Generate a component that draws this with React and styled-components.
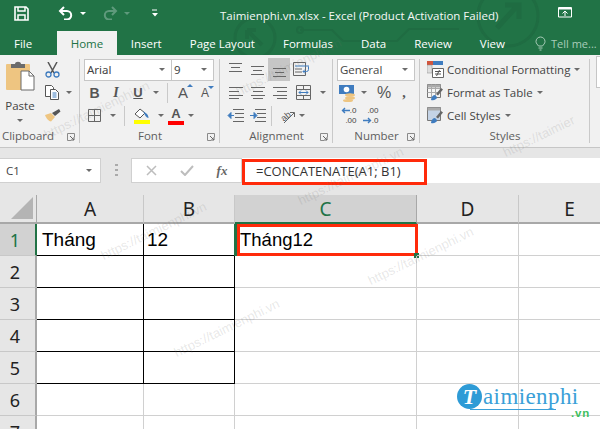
import styled, { createGlobalStyle } from "styled-components";

const UI = `"Open Sans", "Noto Sans", sans-serif`;
const GREEN = "#217346";

const Global = createGlobalStyle`
  html, body { margin: 0; padding: 0; background: #fff; }
  body { width: 600px; height: 429px; overflow: hidden; font-family: ${UI}; }
`;

const Page = styled.div`
  position: relative;
  width: 600px;
  height: 429px;
  overflow: hidden;
  background: #fff;
`;

/* title bar + tabs */
const Head = styled.header`
  position: relative;
  height: 55px;
  background: ${GREEN};
  color: #fff;
`;
const HeadArt = styled.svg`
  position: absolute;
  left: 0;
  top: 0;
`;
const TitleBar = styled.div`
  position: relative;
  display: flex;
  align-items: center;
  height: 31px;
  font-size: 12px;
`;
const Qat = styled.span`
  display: flex;
  align-items: center;
  justify-content: center;
  width: ${(p) => p.$w}px;
  margin-left: ${(p) => p.$ml || 0}px;
  margin-top: -5px;
`;
const Title = styled.div`
  position: absolute;
  left: 220px;
  top: 7px;
  white-space: nowrap;
  font-size: 11.5px;
  line-height: 18px;
  color: #f4f8f6;
`;
const DisplayBtn = styled.span`
  position: absolute;
  left: 558px;
  top: 7px;
  display: flex;
`;
const Tabs = styled.nav`
  position: relative;
  display: flex;
  height: 24px;
`;
const Tab = styled.div`
  display: flex;
  align-items: center;
  padding: 0 ${(p) => p.$pad || 14}px;
  margin-right: ${(p) => p.$mr || 0}px;
  font-size: 11.5px;
  white-space: nowrap;
  background: ${(p) => (p.$active ? "#f1f1f1" : "transparent")};
  color: ${(p) => (p.$active ? GREEN : "#fff")};
`;
const TellMe = styled.div`
  position: absolute;
  left: 535px;
  top: 0;
  height: 24px;
  display: flex;
  align-items: center;
  gap: 5px;
  font-size: 11px;
  color: #a9cdb9;
  white-space: nowrap;
`;

/* ribbon */
const Ribbon = styled.section`
  display: flex;
  height: 92px;
  background: #f1f1f1;
  border-bottom: 1px solid #c6c6c6;
  box-sizing: content-box;
  overflow: hidden;
`;
const Group = styled.div`
  position: relative;
  flex: 0 0 ${(p) => p.$w}px;
  display: flex;
  flex-direction: column;
  height: 92px;
  padding-top: 3px;
  box-sizing: border-box;
  &::after {
    content: "";
    position: absolute;
    right: 0;
    top: 4px;
    bottom: 4px;
    width: 1px;
    background: #c9c9c9;
  }
`;
const GroupBody = styled.div`
  height: 69px;
  display: ${(p) => (p.$split ? "flex" : "block")};
  padding-left: ${(p) => p.$pl || 0}px;
`;
const GroupLabel = styled.div`
  height: 17px;
  line-height: 17px;
  margin-top: 0;
  text-align: center;
  font-size: 11.5px;
  color: #5e5e5e;
  padding-right: ${(p) => p.$pr || 0}px;
`;
const Launcher = styled.svg`
  position: absolute;
  right: 5px;
  bottom: 6px;
`;
const Row = styled.div`
  display: flex;
  align-items: center;
  height: 23px;
`;
const PasteIconRow = styled(Row)`
  height: 33px;
  align-items: flex-end;
`;
const Slot = styled.span`
  flex: 0 0 ${(p) => p.$w || 22}px;
  height: ${(p) => (p.$active ? 23 : 20)}px;
  margin-left: ${(p) => p.$ml || 0}px;
  display: flex;
  align-items: center;
  justify-content: center;
  background: ${(p) => (p.$active ? "#c6c6c6" : "transparent")};
`;
const Rule = styled.span`
  flex: 0 0 1px;
  height: 20px;
  background: #c9c9c9;
  margin: 0 ${(p) => p.$m || 4}px;
`;
const Caret = styled.span`
  width: 0;
  height: 0;
  border-left: 3px solid transparent;
  border-right: 3px solid transparent;
  border-top: 3px solid ${(p) => p.$color || "#6b6b6b"};
  margin-left: ${(p) => p.$ml || 0}px;
  flex: none;
`;
const Combo = styled.div`
  width: ${(p) => p.$w}px;
  height: 22px;
  margin-left: ${(p) => p.$ml || 0}px;
  box-sizing: border-box;
  background: #fff;
  border: 1px solid #c6c6c6;
  display: flex;
  align-items: center;
  justify-content: space-between;
  padding: 0 6px 0 2px;
  font-family: ${(p) => (p.$plain ? UI : `"Noto Sans", sans-serif`)};
  font-size: 11.5px;
  color: #444;
`;
const PasteCol = styled.div`
  flex: 0 0 40px;
  display: flex;
  flex-direction: column;
  align-items: center;
`;
const PasteLabel = styled.div`
  margin-top: 7px;
  font-size: 11.5px;
  line-height: 16px;
  color: #444;
`;
const PasteCaret = styled(Caret)`
  margin-top: 5px;
`;
const ToolCol = styled.div`
  flex: none;
`;
const Glyph = styled.span`
  font-family: ${(p) => (p.$serif ? `"Liberation Serif", serif` : `"Liberation Sans", sans-serif`)};
  font-size: ${(p) => p.$size || 13}px;
  font-weight: ${(p) => (p.$bold ? 700 : 400)};
  font-style: ${(p) => (p.$italic ? "italic" : "normal")};
  text-decoration: ${(p) => (p.$under ? "underline" : "none")};
  color: #555;
  line-height: 1;
`;
const GrowA = styled.span`
  position: relative;
  display: flex;
  font-family: "Liberation Sans", sans-serif;
  font-size: ${(p) => p.$size}px;
  color: #555;
  line-height: 1;
  &::after {
    content: "";
    position: absolute;
    right: -5px;
    top: -1px;
    border-left: 3px solid transparent;
    border-right: 3px solid transparent;
    ${(p) => (p.$up ? "border-bottom: 3px solid #3f7cbf;" : "border-top: 3px solid #3f7cbf;")}
  }
`;
const ColorA = styled.span`
  display: flex;
  flex-direction: column;
  align-items: center;
  width: 16px;
  font-family: "Liberation Sans", sans-serif;
  font-size: 13px;
  font-weight: 700;
  line-height: 13px;
  color: #555;
  &::after {
    content: "";
    width: 16px;
    height: 4px;
    margin-top: 1px;
    background: #f00;
  }
`;
const Decimals = styled.span`
  display: flex;
  flex-direction: column;
  align-items: flex-end;
  width: 17px;
  font-family: "Liberation Sans", sans-serif;
  font-size: 8px;
  line-height: 9.5px;
  color: #444;
`;
const DecimalLine = styled.span`
  display: flex;
  align-items: center;
`;
const StyleRow = styled(Row)`
  gap: 3px;
  padding-left: 7px;
  font-size: 11.5px;
  color: #444;
  white-space: nowrap;
`;
const CutOffBox = styled.div`
  width: 10px;
  height: 30px;
  margin: 1px 0 0 6px;
  background: #fff;
  border: 1px solid #c6c6c6;
  border-right: none;
`;

/* formula bar */
const FormulaBar = styled.section`
  display: flex;
  align-items: flex-start;
  height: 47px;
  padding-top: 10px;
  box-sizing: border-box;
  background: #e6e6e6;
`;
const NameBox = styled.div`
  width: 101px;
  height: 25px;
  box-sizing: border-box;
  display: flex;
  align-items: center;
  justify-content: space-between;
  padding: 0 8px 0 6px;
  background: #fff;
  border: 1px solid #d0d0d0;
  border-left: none;
  font-size: 11.5px;
  color: #444;
`;
const Grip = styled.div`
  flex: 0 0 30px;
  height: 25px;
  display: flex;
  align-items: center;
  justify-content: center;
`;
const FxButtons = styled.div`
  width: 110px;
  height: 25px;
  box-sizing: border-box;
  display: flex;
  align-items: center;
  background: #fff;
  border: 1px solid #d0d0d0;
  border-right: none;
`;
const FxSlot = styled.span`
  flex: 0 0 ${(p) => p.$w}px;
  display: flex;
  justify-content: center;
  font-family: "Liberation Serif", serif;
  font-style: italic;
  font-weight: 700;
  font-size: 13px;
  color: #666;
`;
const FormulaInput = styled.div`
  position: relative;
  flex: 1;
  height: 25px;
  background: #fff;
  border-left: 1px solid #d0d0d0;
  display: flex;
  align-items: center;
  padding-left: 14px;
  font-size: 13px;
  color: #333;
  white-space: nowrap;
`;
const Callout = styled.span`
  position: absolute;
  left: 0;
  top: 1px;
  width: 185px;
  height: 26px;
  box-sizing: border-box;
  border: 3px solid #ff2a0a;
`;

/* sheet */
const Sheet = styled.section`
  display: grid;
  grid-template-columns: 37px 107px 91px 182px 102px 102px;
  grid-template-rows: 29px;
  grid-auto-rows: 32px;
`;
const Corner = styled.div`
  background: #e6e6e6;
  border-right: 1px solid #a8a8a8;
  border-bottom: 2px solid #a8a8a8;
  display: flex;
  align-items: flex-end;
  justify-content: flex-end;
  padding: 0 3px 3px 0;
  box-sizing: border-box;
`;
const ColHead = styled.div`
  box-sizing: border-box;
  background: ${(p) => (p.$on ? "#d2d2d2" : "#e6e6e6")};
  color: ${(p) => (p.$on ? GREEN : "#222")};
  border-right: 1px solid ${(p) => (p.$on ? "#a8a8a8" : "#c8c8c8")};
  border-bottom: 2px solid ${(p) => (p.$on ? GREEN : "#a8a8a8")};
  display: flex;
  align-items: center;
  justify-content: center;
  font-family: "Noto Sans", sans-serif;
  font-size: 19px;
`;
const RowHead = styled.div`
  box-sizing: border-box;
  background: ${(p) => (p.$on ? "#d2d2d2" : "#e6e6e6")};
  color: ${(p) => (p.$on ? GREEN : "#222")};
  border-right: 2px solid ${(p) => (p.$on ? GREEN : "#a8a8a8")};
  border-bottom: 1px solid #c8c8c8;
  display: flex;
  align-items: center;
  justify-content: center;
  padding-right: 5px;
  font-family: "Noto Sans", sans-serif;
  font-size: 18px;
`;
const Cell = styled.div`
  position: relative;
  box-sizing: border-box;
  border-right: 1px solid ${(p) => (p.$black ? "#000" : "#d0d0d0")};
  border-bottom: 1px solid ${(p) => (p.$black ? "#000" : "#d0d0d0")};
  display: flex;
  align-items: center;
  padding-left: ${(p) => p.$pl || 3}px;
  font-family: "Liberation Sans", sans-serif;
  font-size: ${(p) => p.$size || 19}px;
  color: #000;
`;
const Selection = styled.span`
  position: absolute;
  left: -1px;
  top: 0;
  bottom: -1px;
  width: 3px;
  background: ${GREEN};
`;
const RedBox = styled.span`
  position: absolute;
  left: 2px;
  right: -2px;
  top: 0;
  bottom: -1px;
  border: 3px solid #ff2a0a;
`;
const Handle = styled.span`
  position: absolute;
  right: -3px;
  bottom: -3px;
  width: 5px;
  height: 5px;
  background: ${GREEN};
`;

/* overlays */
const Watermark = styled.span`
  position: absolute;
  left: ${(p) => p.$x}px;
  top: ${(p) => p.$y}px;
  font-family: "Liberation Sans", sans-serif;
  font-size: 13px;
  color: rgba(110, 110, 110, 0.17);
  transform: rotate(-26deg);
  transform-origin: left bottom;
  white-space: nowrap;
  pointer-events: none;
`;
const Logo = styled.div`
  position: absolute;
  left: 457px;
  top: 384px;
  width: 135px;
  height: 36px;
  display: flex;
  align-items: flex-start;
`;
const LogoBadge = styled.span`
  flex: 0 0 25px;
  height: 25px;
  border-radius: 50%;
  background: #2e9bd6;
  color: #fff;
  display: flex;
  align-items: center;
  justify-content: center;
  font-family: "Liberation Serif", serif;
  font-style: italic;
  font-weight: 700;
  font-size: 22px;
  line-height: 1;
`;
const LogoName = styled.span`
  position: relative;
  margin-left: 1px;
  margin-top: 1px;
  font-family: "Liberation Serif", serif;
  font-size: 23px;
  line-height: 24px;
  letter-spacing: 0.4px;
  color: #3a9fd8;
  &::after {
    content: "";
    position: absolute;
    left: -13px;
    right: 23px;
    bottom: -1px;
    height: 1px;
    background: #3a9fd8;
  }
`;
const LogoTld = styled.span`
  position: absolute;
  right: 2px;
  top: 24px;
  font-family: "Liberation Sans", sans-serif;
  font-weight: 700;
  font-size: 11.5px;
  line-height: 11px;
  letter-spacing: 0.8px;
  color: #3fbf5f;
`;

/* drawings */
const Svg = ({ w, h, children }) => (
  <svg width={w} height={h} viewBox={`0 0 ${w} ${h}`} fill="none" style={{ display: "block" }}>
    {children}
  </svg>
);

const SaveIcon = () => (
  <Svg w={15} h={15}>
    <path d="M1 1h11l2 2v11H1z" stroke="#fff" strokeWidth="1.6" />
    <path d="M4 1v4h7V1M4 14V9h7v5" stroke="#fff" strokeWidth="1.5" />
  </Svg>
);
const UndoIcon = ({ color }) => (
  <Svg w={15} h={14}>
    <path d="M2 5h7a4.2 4.2 0 0 1 0 8.4H6" stroke={color} strokeWidth="2" />
    <path d="M6 1 2 5l4 4" stroke={color} strokeWidth="2" />
  </Svg>
);
const RedoIcon = ({ color }) => (
  <Svg w={15} h={14}>
    <path d="M13 5H6a4.2 4.2 0 0 0 0 8.4h3" stroke={color} strokeWidth="2" />
    <path d="M9 1l4 4-4 4" stroke={color} strokeWidth="2" />
  </Svg>
);
const CustomizeIcon = () => (
  <Svg w={8} h={9}>
    <path d="M1 1h5" stroke="#fff" />
    <path d="M1 4h6L4 7.5z" fill="#fff" />
  </Svg>
);
const DisplayIcon = () => (
  <Svg w={14} h={11}>
    <path d="M.5.5h13v9.5H.5z" stroke="#fff" />
    <path d="M1 1h12v1.5H1z" fill="#fff" />
    <path d="M7 9V4.5M4.5 6.5 7 4l2.5 2.5" stroke="#fff" />
  </Svg>
);
const BulbIcon = () => (
  <Svg w={11} h={15}>
    <path d="M3.5 10C2.5 8.5 1 7.5 1 5.5a4.5 4.5 0 0 1 9 0c0 2-1.5 3-2.5 4.5z" stroke="#a9cdb9" />
    <path d="M3.5 12h4M4.5 14h2" stroke="#a9cdb9" />
  </Svg>
);
const PasteIcon = () => (
  <Svg w={29} h={30}>
    <rect x="0" y="3" width="24" height="26" rx="1" fill="#eec581" />
    <path d="M5 3h4c0-3 6-3 6 0h4v4H5z" fill="#6b6b6b" />
    <path d="M15 10h8l5 5v14H15z" fill="#fff" stroke="#6b6b6b" />
    <path d="M23 10v5h5" stroke="#6b6b6b" />
  </Svg>
);
const CutIcon = () => (
  <Svg w={15} h={16}>
    <path d="M3 0l6 11M12 0 6 11" stroke="#555" strokeWidth="1.5" />
    <circle cx="3.5" cy="12.5" r="2.5" stroke="#3f7cbf" strokeWidth="1.3" />
    <circle cx="11.5" cy="12.5" r="2.5" stroke="#3f7cbf" strokeWidth="1.3" />
  </Svg>
);
const CopyIcon = () => (
  <Svg w={15} h={15}>
    <path d="M.5.5h6l2 2v9h-8z" fill="#fff" stroke="#555" />
    <path d="M5.5 4.5h5l3 3v7h-8z" fill="#fff" stroke="#555" />
    <path d="M7.5 8h4M7.5 10h4M7.5 12h4" stroke="#3f7cbf" />
  </Svg>
);
const PainterIcon = () => (
  <Svg w={17} h={13}>
    <path d="M1 6l6-2 4 4-4 4.5C5 12.5 2 9 1 6z" fill="#eec581" />
    <path d="M8 4l7-4 1.5 2.5L11 7z" fill="#555" />
  </Svg>
);
const BorderIcon = () => (
  <Svg w={13} h={13}>
    <path d="M.5.5h12v12H.5zM6.5.5v12M.5 6.5h12" stroke="#666" />
  </Svg>
);
const FillIcon = () => (
  <Svg w={17} h={16}>
    <path d="M6 1 1 6l5 4 5-5z" fill="#fff" stroke="#555" />
    <path d="M9 3l4 3c1 1 1.5 3 1.5 4-1 0-2-1-3-2z" fill="#3f7cbf" />
    <path d="M0 12h16v4H0z" fill="#ff0" />
  </Svg>
);
const Lines = ({ rows, w = 15, h = 15, color = "#666" }) => (
  <Svg w={w} h={h}>
    {rows.map(([x1, y, x2], i) => (
      <path key={i} d={`M${x1} ${y + 0.5}H${x2}`} stroke={color} />
    ))}
  </Svg>
);
const WrapIcon = () => (
  <Svg w={17} h={15}>
    <path d="M.5.5h12v13H.5z" stroke="#666" />
    <path d="M2 4h14" stroke="#3f7cbf" />
    <path d="M2 7h7M2 10h7" stroke="#666" />
    <path d="M15.5 4.5v3q0 2-2 2H10M12 7.5l-2 2 2 2" stroke="#3f7cbf" />
  </Svg>
);
const MergeIcon = () => (
  <Svg w={15} h={15}>
    <path d="M.5.5h14v14H.5zM.5 4.5h14M.5 10.5h14M7.5.5v4M7.5 10.5v4" stroke="#666" />
    <path d="M3 7.5h9M5 5.5l-2 2 2 2M10 5.5l2 2-2 2" stroke="#3f7cbf" />
  </Svg>
);
const IndentIcon = ({ flip }) => (
  <Svg w={17} h={13}>
    <path d="M6 .5h11M8 4.5h9M8 8.5h9M6 12.5h11" stroke="#666" />
    {flip ? (
      <path d="M1 6.5h4V3.5l3 3-3 3v-3H1z" fill="#3f7cbf" stroke="#3f7cbf" />
    ) : (
      <path d="M7 6.5H4V3.5l-3 3 3 3v-3z" fill="#3f7cbf" stroke="#3f7cbf" />
    )}
  </Svg>
);
const OrientIcon = () => (
  <Svg w={20} h={18}>
    <text x="4" y="13" fontFamily="Liberation Sans" fontSize="9" fill="#555" transform="rotate(-40 8 10)">ab</text>
    <path d="M7 16 17 6M13 5.5h4.5V10" stroke="#666" />
  </Svg>
);
const MoneyIcon = () => (
  <Svg w={18} h={18}>
    <path d="M0 1h15v9H0z" fill="#3f7cbf" />
    <circle cx="7.5" cy="5.5" r="2.8" fill="#fff" />
    <ellipse cx="11" cy="11" rx="5" ry="1.8" fill="#eec581" />
    <ellipse cx="11" cy="14" rx="5" ry="1.8" fill="#eec581" />
    <ellipse cx="9" cy="16.5" rx="5" ry="1.5" fill="#eec581" />
  </Svg>
);
const ArrowLeft = () => (
  <Svg w={9} h={7}>
    <path d="M9 3.5H2M4 1 1.5 3.5 4 6" stroke="#3f7cbf" strokeWidth="1.4" />
  </Svg>
);
const ArrowRight = () => (
  <Svg w={9} h={7}>
    <path d="M0 3.5h7M5 1l2.5 2.5L5 6" stroke="#3f7cbf" strokeWidth="1.4" />
  </Svg>
);
const CondIcon = () => (
  <Svg w={17} h={17}>
    <path d="M0 0h6v4H0z" fill="#d2553d" />
    <path d="M6 0h10v4H6z" fill="#3f7cbf" />
    <path d="M0 4h5v8H0z" fill="#ddd" stroke="#888" strokeWidth=".5" />
    <path d="M5.5 7.5h11v9h-11z" fill="#fff" stroke="#666" />
    <path d="M8 10.5h6M8 13h6M12.5 9l-3 6" stroke="#555" />
  </Svg>
);
const TableIcon = ({ shaded }) => (
  <Svg w={17} h={17}>
    <path d="M.5.5h13v13H.5z" fill={shaded ? "#c4d3e6" : "#f6f6f6"} stroke="#777" />
    {!shaded && <path d="M.5 4.5h13M.5 8.5h13M4.5.5v13M8.5.5v13" stroke="#aaa" />}
    <path d="M.5.5h13v3H.5z" fill="#aaa" />
    <path d="M9 10l5-6 2 1.5-5 6z" fill="#666" />
    <path d="M4 16c0-3 2-5 4-5l2 2c0 2-3 4-6 3z" fill="#3f7cbf" />
  </Svg>
);
const LauncherIcon = () => (
  <Launcher width="8" height="8" viewBox="0 0 8 8" fill="none">
    <path d="M.5 4V.5H7.5V4M.5 4v3.5H4" stroke="#8a8a8a" />
    <path d="M3 3l4 4M7 4v3H4" stroke="#666" />
  </Launcher>
);

const Art = () => (
  <HeadArt width="600" height="55" viewBox="0 0 600 55" fill="none" stroke="#1f6c42" strokeWidth="3">
    <circle cx="255" cy="38" r="20" />
    <path d="M247 30 262 45M247 30h9M247 30v9" strokeWidth="4" />
    <circle cx="508" cy="16" r="30" />
    <path d="M497 28 518 5M505 5h14v14" strokeWidth="5" />
    <path d="M300 30h32l11 11h54l12-12h50" strokeWidth="2" />
    <circle cx="300" cy="30" r="3" strokeWidth="2" />
  </HeadArt>
);

const colHeads = ["A", "B", "C", "D", "E"];

function RibbonBar() {
  return (
    <Ribbon>
      <Group $w={80}>
        <GroupBody $split>
          <PasteCol>
            <PasteIconRow>
              <PasteIcon />
            </PasteIconRow>
            <PasteLabel>Paste</PasteLabel>
            <PasteCaret />
          </PasteCol>
          <ToolCol>
            <Row><Slot $w={24}><CutIcon /></Slot></Row>
            <Row><Slot $w={24}><CopyIcon /></Slot><Caret $ml={2} /></Row>
            <Row><Slot $w={24}><PainterIcon /></Slot></Row>
          </ToolCol>
        </GroupBody>
        <GroupLabel $pr={24}>Clipboard</GroupLabel>
        <LauncherIcon />
      </Group>

      <Group $w={140}>
        <GroupBody $pl={4}>
          <Row>
            <Combo $w={88}>Arial<Caret /></Combo>
            <Combo $w={43} $ml={-1}>9<Caret /></Combo>
          </Row>
          <Row>
            <Slot $w={21}><Glyph $bold $size={14}>B</Glyph></Slot>
            <Slot><Glyph $italic $bold $serif $size={14}>I</Glyph></Slot>
            <Slot><Glyph $under $bold $size={13}>U</Glyph></Slot>
            <Slot $w={14}><Caret /></Slot>
            <Rule />
            <Slot $w={22}><GrowA $size={15} $up>A</GrowA></Slot>
            <Slot $w={22}><GrowA $size={12}>A</GrowA></Slot>
          </Row>
          <Row>
            <Slot $w={21}><BorderIcon /></Slot>
            <Slot $w={14} $ml={1}><Caret /></Slot>
            <Rule />
            <Slot $w={27}><FillIcon /></Slot>
            <Slot $w={9}><Caret /></Slot>
            <Slot $w={22}><ColorA>A</ColorA></Slot>
            <Slot $w={8}><Caret /></Slot>
          </Row>
        </GroupBody>
        <GroupLabel>Font</GroupLabel>
        <LauncherIcon />
      </Group>

      <Group $w={113}>
        <GroupBody $pl={4}>
          <Row>
            <Slot><Lines rows={[[1, 1, 14], [3, 5, 12], [1, 9, 14]]} /></Slot>
            <Slot><Lines rows={[[1, 4, 14], [3, 8, 12], [1, 12, 14]]} /></Slot>
            <Slot $active><Lines rows={[[1, 6, 14], [3, 10, 12], [1, 14, 14]]} /></Slot>
            <Slot><WrapIcon /></Slot>
          </Row>
          <Row>
            <Slot><Lines rows={[[1, 2, 15], [1, 6, 11], [1, 10, 15], [1, 13, 11]]} /></Slot>
            <Slot><Lines rows={[[1, 2, 15], [3, 6, 13], [1, 10, 15], [3, 13, 13]]} /></Slot>
            <Slot><Lines rows={[[1, 2, 15], [5, 6, 15], [1, 10, 15], [5, 13, 15]]} /></Slot>
            <Slot $w={27}><MergeIcon /></Slot>
            <Slot $w={12}><Caret /></Slot>
          </Row>
          <Row>
            <Slot><IndentIcon /></Slot>
            <Slot><IndentIcon flip /></Slot>
            <Rule $m={3} />
            <Slot $w={24}><OrientIcon /></Slot>
            <Slot $w={6}><Caret /></Slot>
          </Row>
        </GroupBody>
        <GroupLabel>Alignment</GroupLabel>
        <LauncherIcon />
      </Group>

      <Group $w={87}>
        <GroupBody $pl={4}>
          <Row><Combo $w={78} $plain>General<Caret /></Combo></Row>
          <Row>
            <Slot $w={22}><MoneyIcon /></Slot>
            <Slot $w={10}><Caret /></Slot>
            <Slot $w={30}><Glyph $size={16}>%</Glyph></Slot>
            <Slot $w={10}><Glyph $bold $serif $size={14}>,</Glyph></Slot>
          </Row>
          <Row>
            <Slot $w={22}>
              <Decimals>
                <DecimalLine><ArrowLeft />.0</DecimalLine>
                <DecimalLine>.00</DecimalLine>
              </Decimals>
            </Slot>
            <Slot $w={22}>
              <Decimals>
                <DecimalLine>.00</DecimalLine>
                <DecimalLine><ArrowRight />.0</DecimalLine>
              </Decimals>
            </Slot>
          </Row>
        </GroupBody>
        <GroupLabel>Number</GroupLabel>
        <LauncherIcon />
      </Group>

      <Group $w={170}>
        <GroupBody>
          <StyleRow><CondIcon />Conditional Formatting<Caret $ml={1} /></StyleRow>
          <StyleRow><TableIcon />Format as Table<Caret $ml={1} /></StyleRow>
          <StyleRow><TableIcon shaded />Cell Styles<Caret $ml={1} /></StyleRow>
        </GroupBody>
        <GroupLabel>Styles</GroupLabel>
      </Group>
      <CutOffBox />
    </Ribbon>
  );
}

export default function App() {
  const rows = [1, 2, 3, 4, 5, 6, 7];
  return (
    <Page>
      <Global />
      <Head>
        <Art />
        <TitleBar>
          <Qat $w={15} $ml={14}><SaveIcon /></Qat>
          <Qat $w={15} $ml={29}><UndoIcon color="#fff" /></Qat>
          <Qat $w={10} $ml={5}><Caret $color="#fff" /></Qat>
          <Qat $w={15} $ml={15}><RedoIcon color="#5f9a7c" /></Qat>
          <Qat $w={10} $ml={4}><Caret $color="#5f9a7c" /></Qat>
          <Qat $w={8} $ml={19}><CustomizeIcon /></Qat>
          <Title>Taimienphi.vn.xlsx - Excel (Product Activation Failed)</Title>
          <DisplayBtn><DisplayIcon /></DisplayBtn>
        </TitleBar>
        <Tabs>
          <Tab $pad={14} $mr={11}>File</Tab>
          <Tab $active $pad={13.5}>Home</Tab>
          <Tab>Insert</Tab>
          <Tab>Page Layout</Tab>
          <Tab>Formulas</Tab>
          <Tab>Data</Tab>
          <Tab>Review</Tab>
          <Tab>View</Tab>
          <TellMe><BulbIcon />Tell me...</TellMe>
        </Tabs>
      </Head>

      <RibbonBar />

      <FormulaBar>
        <NameBox>C1<Caret /></NameBox>
        <Grip>
          <Svg w={3} h={13}>
            <path d="M0 1h3M0 6h3M0 11h3" stroke="#aaa" strokeWidth="2" />
          </Svg>
        </Grip>
        <FxButtons>
          <FxSlot $w={38}>
            <Svg w={11} h={11}><path d="M1 1l9 9M10 1l-9 9" stroke="#bdbdbd" strokeWidth="1.5" /></Svg>
          </FxSlot>
          <FxSlot $w={34}>
            <Svg w={14} h={11}><path d="M1 6l4 4 8-9" stroke="#bdbdbd" strokeWidth="2" /></Svg>
          </FxSlot>
          <FxSlot $w={36}>fx</FxSlot>
        </FxButtons>
        <FormulaInput>
          =CONCATENATE(A1; B1)
          <Callout />
        </FormulaInput>
      </FormulaBar>

      <Sheet>
        <Corner>
          <Svg w={22} h={22}><path d="M22 0v22H0z" fill="#b4b4b4" /></Svg>
        </Corner>
        {colHeads.map((c) => (
          <ColHead key={c} $on={c === "C"}>{c}</ColHead>
        ))}
        {rows.map((r) => {
          const black = r <= 5;
          return [
            <RowHead key={`h${r}`} $on={r === 1}>{r}</RowHead>,
            <Cell key={`a${r}`} $black={black} $pl={5}>{r === 1 && "Tháng"}</Cell>,
            <Cell key={`b${r}`} $black={black}>{r === 1 && "12"}</Cell>,
            <Cell key={`c${r}`} $pl={5} $size={18.5}>
              {r === 1 && (
                <>
                  Tháng12
                  <Selection />
                  <RedBox />
                  <Handle />
                </>
              )}
            </Cell>,
            <Cell key={`d${r}`} />,
            <Cell key={`e${r}`} />,
          ];
        })}
      </Sheet>

      <Watermark $x={48} $y={127}>https://taimienphi.vn</Watermark>
      <Watermark $x={240} $y={84}>https://taimienphi.vn</Watermark>
      <Watermark $x={507} $y={145}>https://taimier</Watermark>
      <Watermark $x={105} $y={248}>https://taimienphi.vn</Watermark>
      <Watermark $x={302} $y={193}>https://taimienphi.vn</Watermark>
      <Watermark $x={178} $y={345}>https://taimienphi.vn</Watermark>
      <Watermark $x={372} $y={273}>https://taimienphi.vn</Watermark>

      <Logo>
        <LogoBadge>T</LogoBadge>
        <LogoName>aimienphi</LogoName>
        <LogoTld>.vn</LogoTld>
      </Logo>
    </Page>
  );
}
